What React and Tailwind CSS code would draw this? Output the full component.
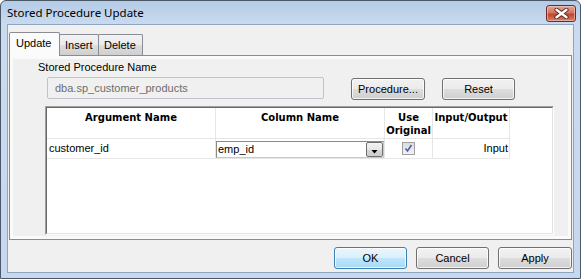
import React from "react";

const F = { fontFamily: '"Liberation Sans", Arial, sans-serif' };

function Btn({ children, className = "", def = false }) {
  return (
    <div
      className={
        "flex items-center justify-center h-[22px] rounded-[3px] border text-[11px] leading-[13px] text-black " +
        (def
          ? "border-[#3c7fb1] bg-[linear-gradient(to_bottom,#eaf6fd_0%,#d9f0fc_48%,#bee6fd_52%,#a7d9f5_100%)] shadow-[inset_0_0_0_1px_rgba(255,255,255,0.75)] "
          : "border-[#707070] bg-[linear-gradient(to_bottom,#f2f2f2_0%,#ebebeb_48%,#dddddd_52%,#cfcfcf_100%)] shadow-[inset_0_0_0_1px_rgba(255,255,255,0.75)] ") +
        className
      }
    >
      {children}
    </div>
  );
}

const H = { fontFamily: '"DejaVu Sans", Verdana, sans-serif' };

export default function App() {
  return (
    <div style={F} className="w-[581px] h-[279px] bg-white">
      <div className="w-[581px] h-[279px] border border-[#4b5868] rounded-t-[6px] bg-[linear-gradient(to_bottom,#b4cbe6_0px,#c9dbef_24px,#c5d8ee_100%)] flex flex-col">
        {/* title bar */}
        <div className="h-[23px] flex items-start justify-between">
          <div
            className="pl-[6px] pt-[4px] text-[11.5px] leading-[16px] text-black"
            style={{ fontFamily: '"Noto Sans", "Open Sans", sans-serif' }}
          >
            Stored Procedure Update
          </div>
          <div className="mt-[4px] mr-[4px] w-[30px] h-[17px] rounded-[3px] border border-[#6b2a22] bg-[linear-gradient(to_bottom,#e8a596_0%,#d2745f_45%,#c0452e_55%,#d8806a_100%)] flex items-center justify-center shadow-[inset_0_0_0_1px_rgba(255,220,210,0.5)]">
            <svg width="15" height="11" viewBox="0 0 15 11">
              <path d="M2.5 1.8 L12.5 9.2 M12.5 1.8 L2.5 9.2" stroke="#5a2a24" strokeWidth="4.2" strokeLinecap="round" />
              <path d="M2.5 1.8 L12.5 9.2 M12.5 1.8 L2.5 9.2" stroke="#ffffff" strokeWidth="2.4" strokeLinecap="round" />
            </svg>
          </div>
        </div>

        {/* client area */}
        <div className="mx-[6px] mb-[5px] flex-1 border border-[#8ea4bf] bg-[#f0f0f0] flex flex-col">
          {/* tabs */}
          <div className="pt-[7px] pl-[1px] flex items-end h-[30px] text-[11px] leading-[13px] text-black">
            <div className="relative z-10 -mb-[1px] w-[51px] h-[24px] border border-b-0 border-[#898c95] rounded-t-[2px] bg-[#fbfbfb] pl-[6px] pt-[4px]">
              Update
            </div>
            <div className="-ml-[1px] w-[40px] h-[21px] border border-b-0 border-[#898c95] rounded-t-[2px] bg-[linear-gradient(to_bottom,#f2f2f2_0%,#ebebeb_50%,#dddddd_52%,#cfcfcf_100%)] pl-[5px] pt-[4px]">
              Insert
            </div>
            <div className="-ml-[1px] w-[45px] h-[21px] border border-b-0 border-[#898c95] rounded-t-[2px] bg-[linear-gradient(to_bottom,#f2f2f2_0%,#ebebeb_50%,#dddddd_52%,#cfcfcf_100%)] pl-[5px] pt-[4px]">
              Delete
            </div>
          </div>

          {/* panel */}
          <div className="ml-[1px] w-[563px] h-[185px] border border-[#898c95] bg-[#fafafa] p-[3px]">
            <div className="w-full h-full bg-[#f0f0f0] flex flex-col text-[11px] leading-[13px] text-black">
              <div className="ml-[25px] mt-[2px] h-[13px]">Stored Procedure Name</div>
              <div className="mt-[3px] h-[23px] flex items-start">
                <div className="ml-[34px] w-[277px] h-[22px] border border-[#c0c4ca] rounded-[2px] bg-[#f0f0f0] text-[#6d6d6d] flex items-center pl-[7px]">
                  dba.sp_customer_products
                </div>
                <Btn className="mt-[1px] ml-[27px] w-[74px]">Procedure...</Btn>
                <Btn className="mt-[1px] ml-[17px] w-[73px]">Reset</Btn>
              </div>

              {/* grid */}
              <div className="ml-[32px] mt-[6px] w-[509px] h-[129px] border border-t-[#a0a0a0] border-l-[#a0a0a0] border-r-[#ffffff] border-b-[#ffffff]">
                <div className="w-full h-full border border-t-[#696969] border-l-[#696969] border-r-[#e3e3e3] border-b-[#e3e3e3] bg-white">
                  {/* header */}
                  <div style={H} className="flex h-[31px] text-[10px] leading-[13px] font-bold">
                    <div className="w-[169px] border-r border-b border-[#e6e6e6] text-center pt-[3px]">Argument Name</div>
                    <div className="w-[169px] border-r border-b border-[#e6e6e6] text-center pt-[3px]">Column Name</div>
                    <div className="w-[48px] border-r border-b border-[#e6e6e6] text-center pt-[3px]">
                      Use
                      <br />
                      Original
                    </div>
                    <div className="w-[77px] border-r border-b border-[#e6e6e6] text-center pt-[3px]">Input/Output</div>
                  </div>
                  {/* row */}
                  <div className="flex h-[20px]">
                    <div className="w-[169px] border-r border-b border-[#e6e6e6] flex items-center pl-[2px]">customer_id</div>
                    <div className="w-[169px] border-r border-b border-[#e6e6e6] pt-[2px]">
                      <div className="w-[168px] h-[17px] border border-[#c8c8c8] border-t-[#8a8a8a] border-l-[#8a8a8a] bg-white flex items-center justify-between">
                        <span className="pl-[1px]">emp_id</span>
                        <div className="w-[17px] h-[15px] border border-[#707070] rounded-[2px] bg-[linear-gradient(to_bottom,#f3f3f3_0%,#e6e6e6_50%,#d6d6d6_52%,#cdcdcd_100%)] flex items-center justify-center">
                          <svg width="7" height="8" viewBox="0 0 7 8">
                            <path d="M0.5 4 L6.5 4 L3.5 7.5 Z" fill="#000" />
                          </svg>
                        </div>
                      </div>
                    </div>
                    <div className="w-[48px] border-r border-b border-[#e6e6e6] flex items-center justify-center">
                      <div className="w-[13px] h-[13px] border border-[#a0a0a0] bg-[linear-gradient(to_bottom,#dcdcdc_0%,#f2f2f2_100%)] flex items-center justify-center">
                        <svg width="9" height="9" viewBox="0 0 9 9">
                          <path d="M1.5 4.5 L3.5 7 L7.5 1" stroke="#4a62a6" strokeWidth="1.6" fill="none" />
                        </svg>
                      </div>
                    </div>
                    <div className="w-[77px] border-r border-b border-[#e6e6e6] flex items-center justify-end pr-[1px]">Input</div>
                  </div>
                </div>
              </div>
            </div>
          </div>

          {/* bottom buttons */}
          <div className="mt-[7px] flex justify-end gap-[9px] pr-[1px]">
            <Btn def className="w-[73px]">OK</Btn>
            <Btn className="w-[73px]">Cancel</Btn>
            <Btn className="w-[74px]">Apply</Btn>
          </div>
        </div>
      </div>
    </div>
  );
}
